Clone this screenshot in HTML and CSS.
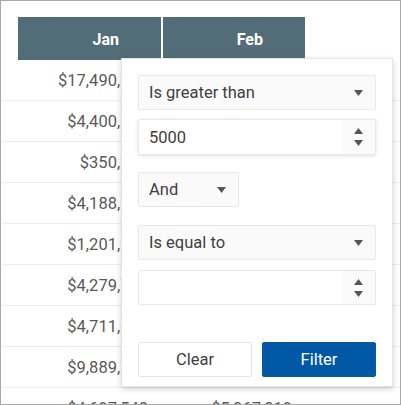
FILE: index.html
```html
<!DOCTYPE html>
<html>
<head>
<meta charset="utf-8">
<link rel="stylesheet" href="styles.css">
</head>
<body>
<div class="frame">
  <div class="grid">
    <div class="head">
      <div class="hcell">Jan</div>
      <div class="hcell">Feb</div>
    </div>
    <div class="row"><div class="cell">$17,490,077</div><div class="cell">$17,002,315</div></div>
    <div class="row"><div class="cell">$4,400,350</div><div class="cell">$4,509,112</div></div>
    <div class="row"><div class="cell">$350,270</div><div class="cell">$361,482</div></div>
    <div class="row"><div class="cell">$4,188,090</div><div class="cell">$4,012,337</div></div>
    <div class="row"><div class="cell">$1,201,906</div><div class="cell">$1,322,540</div></div>
    <div class="row"><div class="cell">$4,279,787</div><div class="cell">$4,390,101</div></div>
    <div class="row"><div class="cell">$4,711,045</div><div class="cell">$4,823,664</div></div>
    <div class="row"><div class="cell">$9,889,712</div><div class="cell">$9,654,208</div></div>
    <div class="row"><div class="cell">$4,697,548</div><div class="cell">$5,067,819</div></div>
  </div>

  <div class="popup">
    <div class="field select">
      <span>Is greater than</span>
      <svg class="caret" width="9" height="6" viewBox="0 0 9 6"><polygon points="0,0 9,0 4.5,6" fill="#555"/></svg>
    </div>
    <div class="field number focused">
      <span>5000</span>
      <div class="spin">
        <svg width="9" height="6" viewBox="0 0 9 6"><polygon points="0,6 9,6 4.5,0" fill="#555"/></svg>
        <svg width="9" height="6" viewBox="0 0 9 6"><polygon points="0,0 9,0 4.5,6" fill="#555"/></svg>
      </div>
    </div>
    <div class="field select small">
      <span>And</span>
      <svg class="caret" width="9" height="6" viewBox="0 0 9 6"><polygon points="0,0 9,0 4.5,6" fill="#555"/></svg>
    </div>
    <div class="field select gap">
      <span>Is equal to</span>
      <svg class="caret" width="9" height="6" viewBox="0 0 9 6"><polygon points="0,0 9,0 4.5,6" fill="#555"/></svg>
    </div>
    <div class="field number second">
      <span></span>
      <div class="spin">
        <svg width="9" height="6" viewBox="0 0 9 6"><polygon points="0,6 9,6 4.5,0" fill="#555"/></svg>
        <svg width="9" height="6" viewBox="0 0 9 6"><polygon points="0,0 9,0 4.5,6" fill="#555"/></svg>
      </div>
    </div>
    <div class="buttons">
      <div class="btn clear">Clear</div>
      <div class="btn filter">Filter</div>
    </div>
  </div>
</div>
</body>
</html>
```

FILE: styles.css
```css
html, body {
  margin: 0;
  padding: 0;
  background: #fff;
}
.frame {
  position: relative;
  width: 401px;
  height: 405px;
  box-sizing: border-box;
  border: 1px solid #a8a8a8;
  overflow: hidden;
  font-family: Roboto, "Liberation Sans", sans-serif;
}
.grid {
  padding-top: 16px;
}
.head {
  display: flex;
  margin-left: 17px;
  gap: 2px;
}
.hcell {
  width: 143px;
  height: 43px;
  box-sizing: border-box;
  background: #536d78;
  color: #fff;
  font-weight: 700;
  font-size: 16px;
  display: flex;
  align-items: center;
  justify-content: flex-end;
  padding-right: 42px;
  padding-top: 2px;
}
.hcell + .hcell {
  width: 142px;
}
.row {
  display: flex;
  height: 41px;
  box-sizing: border-box;
  border-bottom: 1px solid #ececec;
  padding-left: 17px;
  gap: 2px;
  margin-left: 1px;
}
.cell {
  width: 143px;
  box-sizing: border-box;
  text-align: right;
  padding-right: 14px;
  font-size: 16.5px;
  color: #5a5a5a;
  line-height: 42px;
}
.cell + .cell {
  width: 142px;
}
.popup {
  position: absolute;
  left: 120px;
  top: 57px;
  width: 272px;
  height: 329px;
  box-sizing: border-box;
  background: #fff;
  border: 1px solid #e4e4e4;
  box-shadow: 0 2px 6px rgba(0,0,0,0.18);
  padding: 16px 16px 8px;
}
.field {
  height: 35px;
  box-sizing: border-box;
  border: 1px solid #e8e8e8;
  border-radius: 2px;
  background: #fafafa;
  display: flex;
  align-items: center;
  justify-content: space-between;
  padding-left: 10px;
  font-size: 16.5px;
  color: #404040;
}
.caret {
  margin-right: 12px;
}
.number {
  background: #fff;
  margin-top: 9px;
  height: 36px;
  padding-right: 0;
}
.number.focused {
  box-shadow: 0 1px 4px rgba(0,0,0,0.12);
}
.spin {
  width: 33px;
  align-self: stretch;
  display: flex;
  flex-direction: column;
  align-items: center;
  justify-content: center;
  gap: 6px;
  background: #fbfbfb;
}
.small {
  width: 101px;
  margin-top: 17px;
}
.gap {
  margin-top: 18px;
}
.second {
  margin-top: 10px;
  height: 35px;
}
.buttons {
  display: flex;
  gap: 10px;
  margin-top: 37px;
}
.btn {
  flex: 1;
  height: 35px;
  box-sizing: border-box;
  border-radius: 2px;
  display: flex;
  align-items: center;
  justify-content: center;
  font-size: 16.5px;
}
.clear {
  background: #fff;
  border: 1px solid #e6e6e6;
  color: #404040;
}
.filter {
  background: #0158a5;
  color: #fff;
  border: 1px solid #0a5aa3;
}
```
